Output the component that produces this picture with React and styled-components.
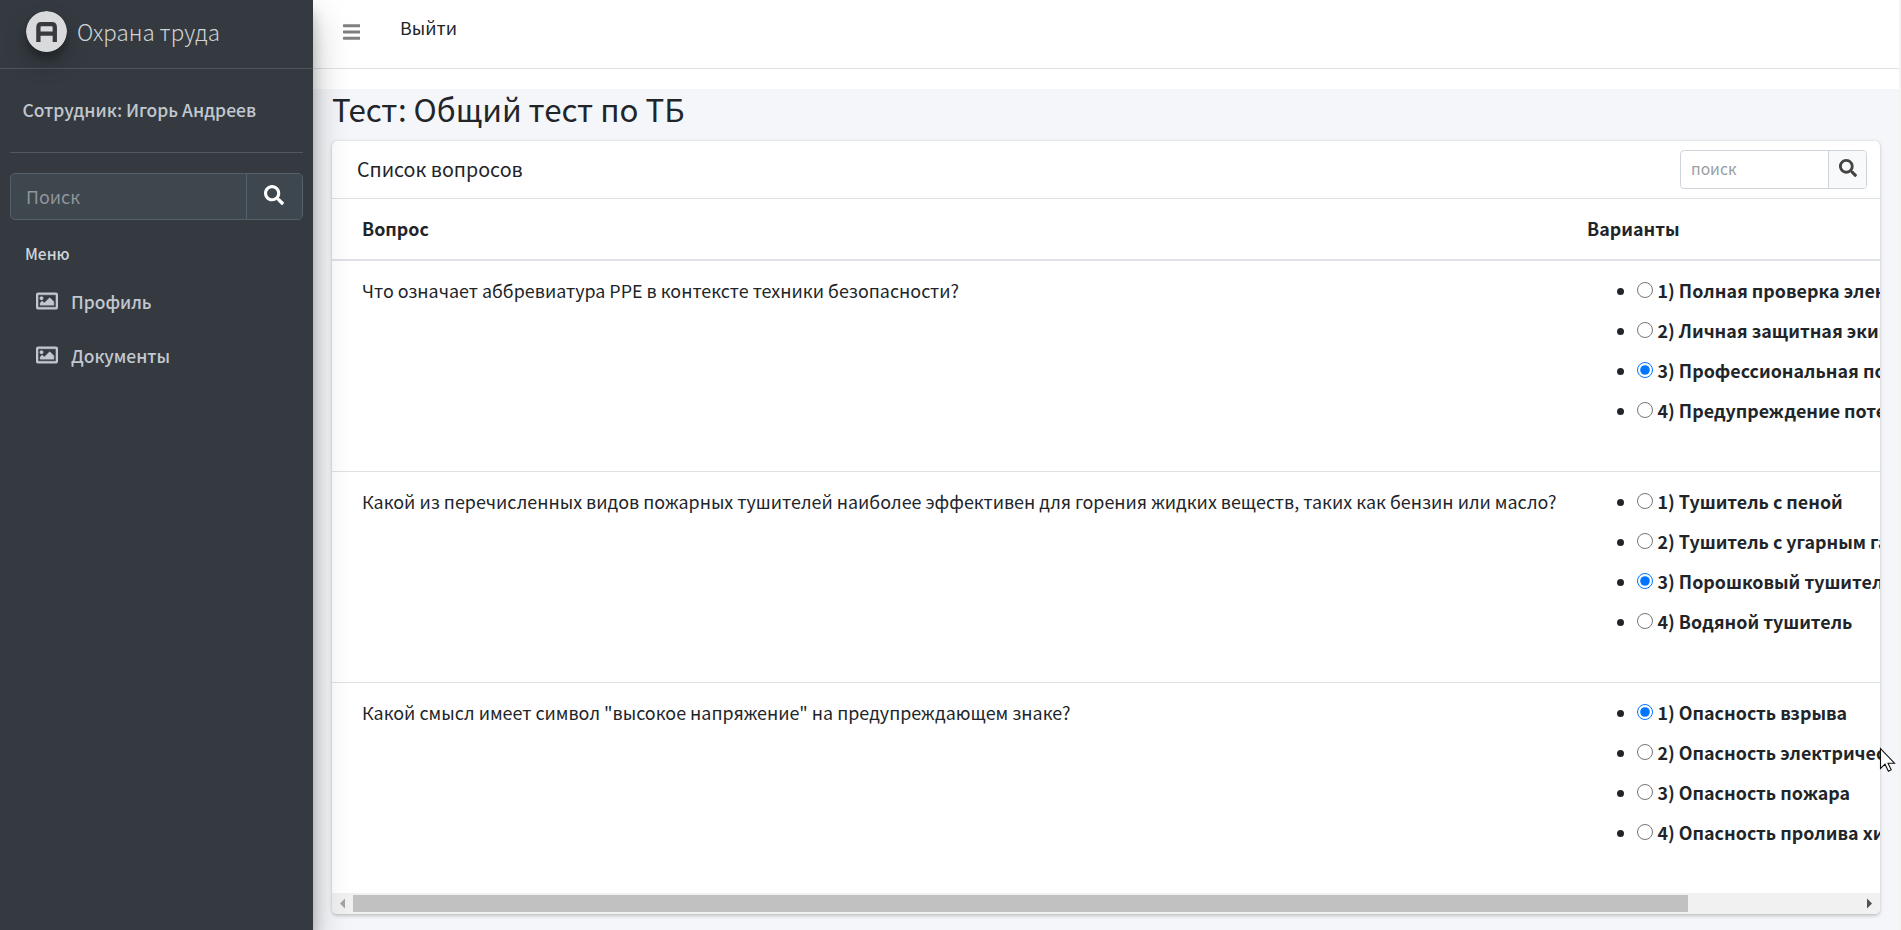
import React from 'react';
import styled, { createGlobalStyle, css } from 'styled-components';
import { FaBars, FaRegImage, FaSearch } from 'react-icons/fa';

const GlobalStyle = createGlobalStyle`
  *, *::before, *::after { box-sizing: border-box; }
  body {
    margin: 0;
    overflow: hidden;
    background: #f4f6f9;
    color: #212529;
    font-family: "Noto Sans CJK SC", "Open Sans", sans-serif;
    font-size: 17.9px;
    line-height: 30px;
  }
  h1, h2, ul { margin: 0; padding: 0; font-weight: 400; }
  input, button { font: inherit; }
`;

const Page = styled.div`
  display: flex;
  width: 100%;
  height: 930px;
  border-right: 2px solid #f3f3f4;
`;

/* Sidebar */
const Sidebar = styled.aside`
  position: relative;
  z-index: 2;
  flex: none;
  width: 313px;
  height: 100%;
  background: #343a40;
  color: #c2c7d0;
  box-shadow: 0 17.5px 35px rgba(0, 0, 0, 0.25), 0 12.5px 12.5px rgba(0, 0, 0, 0.22);
`;

const Brand = styled.div`
  display: flex;
  height: 69px;
  padding: 11px 0 0 26px;
  border-bottom: 1px solid #4b545c;
`;

const Logo = styled.svg`
  flex: none;
  width: 41px;
  height: 41px;
  border-radius: 50%;
  box-shadow: 0 12px 24px rgba(0, 0, 0, 0.19), 0 7px 7px rgba(0, 0, 0, 0.23);
`;

const BrandName = styled.span`
  margin: 5px 0 0 10px;
  color: #d0d2d4;
  font-size: 22.4px;
  font-weight: 300;
`;

const UserPanel = styled.div`
  height: 84px;
  margin: 0 10px;
  padding: 26px 0 0 12.4px;
  border-bottom: 1px solid #4f5962;
  font-size: 17.5px;
  font-weight: 500;
  white-space: nowrap;
`;

const SearchGroup = styled.div`
  display: flex;
  overflow: hidden;
  ${({ $dark }) =>
    $dark
      ? css`
          width: 293px;
          height: 47px;
          margin: 20px 10px 0;
          border: 1px solid #56606a;
          border-radius: 5px;
          background: #3f474e;
          --field-pad: 0 15px 2px;
          --divider: #56606a;
          --icon: #fff;
          --button: #3f474e;
          --button-width: 56px;
          --button-pad: 0 2px 3px 0;
          --icon-size: 20px;
          --placeholder: #8f959a;
        `
      : css`
          width: 187px;
          height: 39px;
          border: 1px solid #ced4da;
          border-radius: 4px;
          background: #fff;
          font-size: 15.6px;
          --field-pad: 0 10px 3px;
          --divider: #ced4da;
          --icon: #444;
          --button: #f8f9fa;
          --button-width: 38px;
          --button-pad: 0 0 3px;
          --icon-size: 18px;
          --placeholder: #999ea3;
        `}
`;

const SearchField = styled.input`
  flex: 1;
  min-width: 0;
  padding: var(--field-pad);
  border: 0;
  outline: 0;
  background: transparent;
  &::placeholder { color: var(--placeholder); opacity: 1; }
`;

const SearchButton = styled.button`
  display: flex;
  align-items: center;
  justify-content: center;
  width: var(--button-width);
  padding: var(--button-pad);
  border: 0;
  border-left: 1px solid var(--divider);
  background: var(--button);
  color: var(--icon);
  svg { width: var(--icon-size); height: var(--icon-size); }
`;

const MenuHeader = styled.div`
  margin: 19.5px 0 0 25px;
  color: #d0d4db;
  font-size: 15.5px;
  font-weight: 500;
  line-height: 26px;
`;

const Nav = styled.nav`
  display: flex;
  flex-direction: column;
  gap: 24px;
  padding: 21.5px 0 0 36px;
`;

const NavItem = styled.a`
  display: flex;
  gap: 13px;
  font-size: 17.4px;
  font-weight: 500;
  svg { width: 22px; height: 22px; margin-top: 2.5px; stroke: currentColor; stroke-width: 10px; }
`;

/* Main area */
const Main = styled.main`
  flex: 1;
  min-width: 0;
`;

const TopBar = styled.header`
  display: flex;
  height: 69px;
  padding: 12px 0 0 29.5px;
  border-bottom: 1px solid #dee2e6;
  background: #fff;
  svg { width: 17.5px; height: 20px; margin-top: 10.4px; color: rgba(0, 0, 0, 0.5); }
`;

const LogoutLink = styled.a`
  margin-left: 40px;
`;

const Spacer = styled.div`
  height: 20px;
  background: #fff;
`;

const Content = styled.section`
  padding: 0 19px 0 19px;
`;

const PageTitle = styled.h1`
  padding-top: 1px;
  font-size: 31.25px;
  line-height: 38px;
`;

const Card = styled.div`
  margin-top: 13px;
  overflow: hidden;
  border-radius: 5px;
  background: #fff;
  box-shadow: 0 0 1.25px rgba(0, 0, 0, 0.125), 0 1.25px 3.75px rgba(0, 0, 0, 0.2);
`;

const CardHeader = styled.div`
  display: flex;
  justify-content: space-between;
  height: 58px;
  padding: 9px 13px 0 25px;
  border-bottom: 1px solid #dfe1e4;
`;

const CardTitle = styled.h2`
  margin-top: 3.5px;
  font-size: 19.65px;
`;

const Row = styled.div`
  display: grid;
  grid-template-columns: 1225px 1fr;
  height: ${({ $first }) => ($first ? 210 : 211)}px;
  padding: 14px 0 0 30px;
  border-top: ${({ $first }) => ($first ? 0 : 1)}px solid #dee2e6;
  white-space: nowrap;
`;

const HeadRow = styled(Row)`
  height: 62px;
  border-top: 0;
  border-bottom: 2px solid #dee2e6;
  font-size: 17.85px;
  font-weight: 700;
`;

const Options = styled.ul`
  display: flex;
  flex-direction: column;
  gap: 10px;
  min-width: 0;
  padding-left: 29.5px;
  list-style: none;
  font-size: 17.85px;
  font-weight: 700;
`;

const Option = styled.li`
  display: flex;
  height: 30px;
  &::before {
    content: "";
    flex: none;
    width: 7px;
    height: 7px;
    margin: 13px 13.5px 0 0;
    border-radius: 50%;
    background: #212529;
  }
`;

const Radio = styled.input`
  flex: none;
  width: 16px;
  height: 16px;
  margin: 6.5px 4.5px 0 0;
`;

const ScrollBar = styled.div`
  display: flex;
  align-items: center;
  height: 21px;
  background: #f1f1f1;
`;

const Arrow = styled.svg`
  flex: none;
  width: 21px;
  height: 21px;
  fill: ${({ $muted }) => ($muted ? '#a3a3a3' : '#505050')};
`;

const Thumb = styled.div`
  width: 1335px;
  height: 17px;
  margin-right: auto;
  background: #c1c1c1;
`;

const Cursor = styled.svg`
  position: absolute;
  z-index: 3;
  left: 1879px;
  top: 747px;
  width: 18px;
  height: 26px;
`;

const QUESTIONS = [
  {
    text: 'Что означает аббревиатура PPE в контексте техники безопасности?',
    checked: 2,
    options: [
      'Полная проверка электрооборудования',
      'Личная защитная экипировка',
      'Профессиональная подготовка',
      'Предупреждение потенциальных опасностей',
    ],
  },
  {
    text: 'Какой из перечисленных видов пожарных тушителей наиболее эффективен для горения жидких веществ, таких как бензин или масло?',
    checked: 2,
    options: ['Тушитель с пеной', 'Тушитель с угарным газом', 'Порошковый тушитель', 'Водяной тушитель'],
  },
  {
    text: 'Какой смысл имеет символ "высокое напряжение" на предупреждающем знаке?',
    checked: 0,
    options: ['Опасность взрыва', 'Опасность электрического удара', 'Опасность пожара', 'Опасность пролива химических веществ'],
  },
];

function Search({ dark, placeholder }) {
  return (
    <SearchGroup $dark={dark}>
      <SearchField placeholder={placeholder} />
      <SearchButton type="button" aria-label={placeholder}>
        <FaSearch />
      </SearchButton>
    </SearchGroup>
  );
}

export default function App() {
  return (
    <>
      <GlobalStyle />
      <Page>
        <Sidebar>
          <Brand>
            <Logo viewBox="0 0 41 41">
              <circle cx="20.5" cy="20.5" r="20.5" fill="#d8dadb" />
              <path
                d="M12.4 31V16.2Q12.4 13.2 15.4 13.2H25.8Q28.8 13.2 28.8 16.2V31M12.4 22.7H28.8"
                fill="none"
                stroke="#363a3f"
                strokeWidth="4.3"
              />
            </Logo>
            <BrandName>Охрана труда</BrandName>
          </Brand>
          <UserPanel>Сотрудник: Игорь Андреев</UserPanel>
          <Search dark placeholder="Поиск" />
          <MenuHeader>Меню</MenuHeader>
          <Nav>
            <NavItem>
              <FaRegImage />
              Профиль
            </NavItem>
            <NavItem>
              <FaRegImage />
              Документы
            </NavItem>
          </Nav>
        </Sidebar>
        <Main>
          <TopBar>
            <FaBars />
            <LogoutLink>Выйти</LogoutLink>
          </TopBar>
          <Spacer />
          <Content>
            <PageTitle>Тест: Общий тест по ТБ</PageTitle>
            <Card>
              <CardHeader>
                <CardTitle>Список вопросов</CardTitle>
                <Search placeholder="поиск" />
              </CardHeader>
              <HeadRow>
                <span>Вопрос</span>
                <span>Варианты</span>
              </HeadRow>
              {QUESTIONS.map((question, q) => (
                <Row key={question.text} $first={q === 0}>
                  <span>{question.text}</span>
                  <Options>
                    {question.options.map((option, i) => (
                      <Option key={option}>
                        <Radio type="radio" name={`question-${q}`} defaultChecked={i === question.checked} />
                        {i + 1}) {option}
                      </Option>
                    ))}
                  </Options>
                </Row>
              ))}
              <ScrollBar>
                <Arrow $muted viewBox="0 0 21 21">
                  <path d="M13 5.5v10l-5-5z" />
                </Arrow>
                <Thumb />
                <Arrow viewBox="0 0 21 21">
                  <path d="M8 5.5v10l5-5z" />
                </Arrow>
              </ScrollBar>
            </Card>
          </Content>
        </Main>
      </Page>
      <Cursor viewBox="0 0 18 26">
        <path
          d="M1.5 1.5V21.5L6 17.2L9.4 24.2L12.2 22.8L9 16.2H15.5Z"
          fill="#fff"
          stroke="#111"
          strokeWidth="1.1"
        />
      </Cursor>
    </>
  );
}
